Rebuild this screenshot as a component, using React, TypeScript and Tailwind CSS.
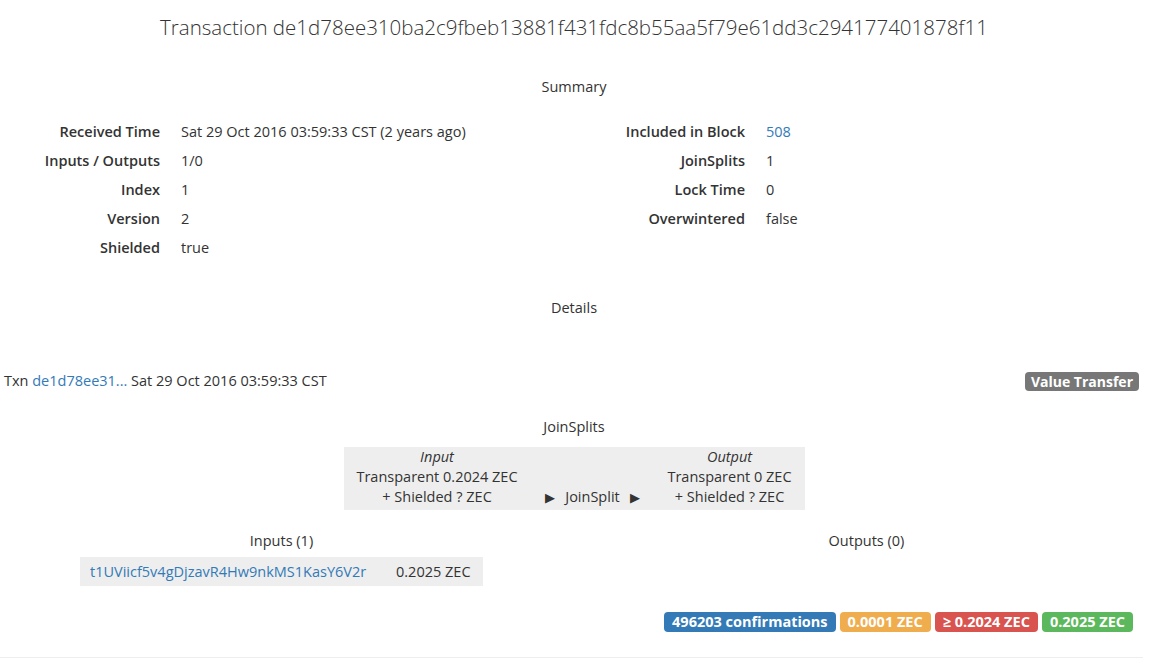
import React from "react";

type Row = {
  label: string;
  value: React.ReactNode;
};

const leftRows: Row[] = [
  { label: "Received Time", value: "Sat 29 Oct 2016 03:59:33 CST (2 years ago)" },
  { label: "Inputs / Outputs", value: "1/0" },
  { label: "Index", value: "1" },
  { label: "Version", value: "2" },
  { label: "Shielded", value: "true" },
];

const rightRows: Row[] = [
  { label: "Included in Block", value: <span className="text-[#337ab7]">508</span> },
  { label: "JoinSplits", value: "1" },
  { label: "Lock Time", value: "0" },
  { label: "Overwintered", value: "false" },
];

const InfoList = ({ rows }: { rows: Row[] }) => (
  <dl className="flex flex-col">
    {rows.map((row) => (
      <div key={row.label} className="flex h-[29px] items-center">
        <dt className="w-[160px] text-right font-semibold">{row.label}</dt>
        <dd className="ml-[21px]">{row.value}</dd>
      </div>
    ))}
  </dl>
);

const badges = [
  { text: "496203 confirmations", color: "bg-[#337ab7]" },
  { text: "0.0001 ZEC", color: "bg-[#f0ad4e]" },
  { text: "\u2265 0.2024 ZEC", color: "bg-[#d9534f]" },
  { text: "0.2025 ZEC", color: "bg-[#5cb85c]" },
];

export default function App() {
  return (
    <div className="w-[1148px] bg-white font-['Open_Sans',sans-serif] text-[14.5px] leading-[20px] text-[#333]">
      <h1 className="pt-[12px] text-center text-[20.5px] font-light leading-[30px]">
        Transaction de1d78ee310ba2c9fbeb13881f431fdc8b55aa5f79e61dd3c294177401878f11
      </h1>

      <h4 className="mt-[35px] text-center">Summary</h4>

      <div className="mt-[20px] grid grid-cols-2 gap-[22px]">
        <InfoList rows={leftRows} />
        <InfoList rows={rightRows} />
      </div>

      <h4 className="mt-[36px] text-center">Details</h4>

      <div className="mt-[53px] flex items-center justify-between pl-[4px] pr-[9px]">
        <div>
          Txn <a className="text-[#337ab7]">de1d78ee31...</a> Sat 29 Oct 2016 03:59:33 CST
        </div>
        <span className="rounded-[4px] bg-[#777] px-[6px] text-[14px] font-bold leading-[19px] text-white">
          Value Transfer
        </span>
      </div>

      <h4 className="mt-[26px] text-center">JoinSplits</h4>

      <div className="mt-[10px] flex justify-center">
        <div className="flex items-end bg-[#eee] pb-[3px] leading-[20px]">
          <div className="flex w-[187px] flex-col items-center">
            <em>Input</em>
            <span>Transparent 0.2024 ZEC</span>
            <span>+ Shielded ? ZEC</span>
          </div>
          <div className="flex w-[124px] items-center justify-center gap-[10px]">
            <span className="text-[13px]">&#9654;</span>
            <span>JoinSplit</span>
            <span className="text-[13px]">&#9654;</span>
          </div>
          <div className="flex w-[150px] flex-col items-center">
            <em>Output</em>
            <span>Transparent 0 ZEC</span>
            <span>+ Shielded ? ZEC</span>
          </div>
        </div>
      </div>

      <div className="mt-[21px] grid grid-cols-2 gap-[22px]">
        <div className="flex flex-col items-center">
          <h4>Inputs (1)</h4>
          <div className="mt-[6px] flex h-[29px] items-center bg-[#eee]">
            <a className="w-[306px] px-[10px] text-[#337ab7]">t1UViicf5v4gDjzavR4Hw9nkMS1KasY6V2r</a>
            <span className="w-[97px] px-[10px]">0.2025 ZEC</span>
          </div>
        </div>
        <div className="flex flex-col items-center">
          <h4>Outputs (0)</h4>
        </div>
      </div>

      <div className="mt-[26px] flex justify-end gap-[4px] pr-[15px]">
        {badges.map((b) => (
          <span
            key={b.text}
            className={`${b.color} rounded-[4px] px-[8px] text-[14.5px] font-bold leading-[20px] text-white`}
          >
            {b.text}
          </span>
        ))}
      </div>

      <hr className="mt-[25px] w-[1143px] border-t border-[#eee]" />
    </div>
  );
}
